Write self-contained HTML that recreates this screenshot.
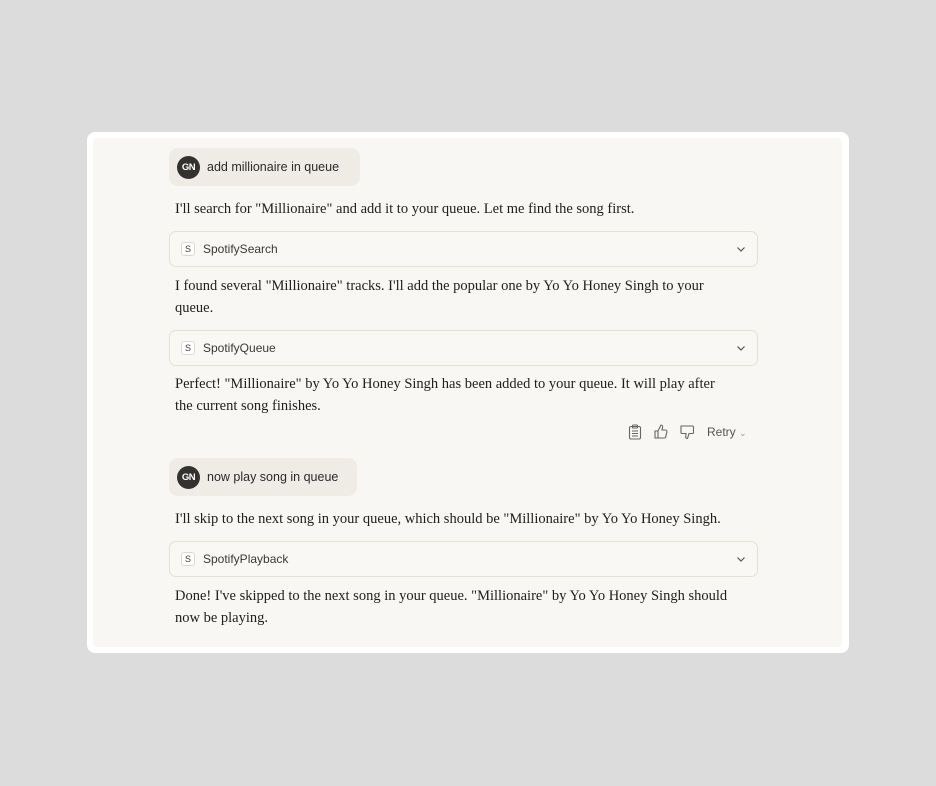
<!DOCTYPE html>
<html><head><style>
*{margin:0;padding:0;box-sizing:border-box}
body{width:936px;height:786px;background:#dcdcdc;position:relative;font-family:"Liberation Serif",serif;overflow:hidden}
.card{position:absolute;left:87px;top:132px;width:762px;height:521px;background:#fff;border-radius:8px}
.inner{position:absolute;left:93px;top:138px;width:749px;height:509px;background:#f8f7f3;border-radius:4px}
.bub{position:absolute;left:169px;height:38px;background:#efece5;border-radius:9px;font-family:"Liberation Sans",sans-serif;font-size:12.5px;color:#2b2a27;display:flex;align-items:center;padding-left:8px}
.av{width:23px;height:23px;border-radius:50%;background:#34322f;color:#fff;font-size:9.5px;font-weight:bold;display:flex;align-items:center;justify-content:center;margin-right:7px;letter-spacing:-0.5px}
.t{position:absolute;left:175px;width:548px;font-size:14.5px;line-height:22px;color:#1f1e1c}
.tool{position:absolute;left:169px;width:589px;height:36px;border:1px solid #e3e0d8;border-radius:7px;background:#f9f8f4;font-family:"Liberation Sans",sans-serif;font-size:12px;color:#3a3936;display:flex;align-items:center;padding-left:11px}
.s{width:14px;height:14px;border:1px solid #ddd9d0;background:#fff;border-radius:3px;font-size:9px;display:flex;align-items:center;justify-content:center;margin-right:8px}
.chev{position:absolute;right:11px;top:12px}
</style></head><body>
<div class="card"></div><div class="inner"></div>
<div class="bub" style="top:148px;width:191px"><div class="av">GN</div>add millionaire in queue</div>
<div class="t" style="top:198px;width:600px">I'll search for "Millionaire" and add it to your queue. Let me find the song first.</div>
<div class="tool" style="top:231px"><div class="s">S</div>SpotifySearch<svg class="chev" width="10" height="10" viewBox="0 0 10 10"><path d="M1.5 3.5L5 7l3.5-3.5" fill="none" stroke="#555" stroke-width="1.2"/></svg></div>
<div class="t" style="top:275px">I found several "Millionaire" tracks. I'll add the popular one by Yo Yo Honey Singh to your queue.</div>
<div class="tool" style="top:330px"><div class="s">S</div>SpotifyQueue<svg class="chev" width="10" height="10" viewBox="0 0 10 10"><path d="M1.5 3.5L5 7l3.5-3.5" fill="none" stroke="#555" stroke-width="1.2"/></svg></div>
<div class="t" style="top:373px">Perfect! "Millionaire" by Yo Yo Honey Singh has been added to your queue. It will play after the current song finishes.</div>
<svg style="position:absolute;left:628px;top:424px" width="14" height="16" viewBox="0 0 14 16" fill="none" stroke="#666" stroke-width="1.1"><rect x="1.5" y="2.5" width="11" height="12.5" rx="1.5"/><rect x="4.5" y="1" width="5" height="3" rx="0.8"/><path d="M4 7h6M4 9.5h6M4 12h6"/></svg>
<svg style="position:absolute;left:654px;top:424px" width="14" height="15" viewBox="0 0 14 15" fill="none" stroke="#666" stroke-width="1.1"><path d="M1 7h3v7H1zM4 7l3-6c1.2 0 1.8.8 1.6 2L8 6h3.5c1 0 1.6.9 1.4 1.8l-1.2 5.2c-.2.7-.8 1-1.4 1H4"/></svg>
<svg style="position:absolute;left:680px;top:425px" width="14" height="15" viewBox="0 0 14 15" fill="none" stroke="#666" stroke-width="1.1"><path d="M1 1h11.5c.6 0 1 .4 1 1v5.5c0 .6-.4 1-1 1H9l-1.5 5c-1.2 0-2-.8-1.8-2L6 8.5H2c-.6 0-1-.4-1-1z"/></svg>
<div style="position:absolute;left:707px;top:425px;font-family:'Liberation Sans',sans-serif;font-size:12px;color:#555">Retry <span style="font-size:9px;color:#999">&#8964;</span></div>
<div class="bub" style="top:458px;width:188px"><div class="av">GN</div>now play song in queue</div>
<div class="t" style="top:508px;width:600px">I'll skip to the next song in your queue, which should be "Millionaire" by Yo Yo Honey Singh.</div>
<div class="tool" style="top:541px"><div class="s">S</div>SpotifyPlayback<svg class="chev" width="10" height="10" viewBox="0 0 10 10"><path d="M1.5 3.5L5 7l3.5-3.5" fill="none" stroke="#555" stroke-width="1.2"/></svg></div>
<div class="t" style="top:585px;width:560px">Done! I've skipped to the next song in your queue. "Millionaire" by Yo Yo Honey Singh should now be playing.</div>
</body></html>
